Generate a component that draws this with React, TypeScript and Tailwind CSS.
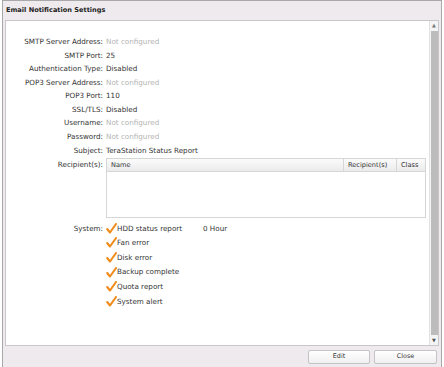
import React from 'react';

const F = { fontFamily: '"DejaVu Sans", sans-serif' };

function Row({ label, value, muted }: { label: string; value: string; muted?: boolean }) {
  return (
    <div className="flex h-[13.55px] items-center">
      <div className="w-[97px] text-right text-[#333]">{label}</div>
      <div className={'pl-[3px] ' + (muted ? 'text-[#b4b4b4]' : 'text-[#333]')}>{value}</div>
    </div>
  );
}

function Check() {
  return (
    <svg width="11" height="11" viewBox="0 0 11 11" className="shrink-0">
      <path d="M1.2 6 L4 9.5 L10 1" fill="none" stroke="#f08c1a" strokeWidth="2.1" strokeLinecap="round" strokeLinejoin="round" />
    </svg>
  );
}

const alerts = ['HDD status report', 'Fan error', 'Disk error', 'Backup complete', 'Quota report', 'System alert'];

export default function App() {
  return (
    <div className="w-[444px] h-[367px] bg-white pl-[2px] overflow-hidden text-[7.2px] leading-none" style={F}>
      <div className="w-[440px] h-[367px] flex flex-col bg-[#efeaee] border-l border-t border-r border-[#a8a8a8]">
        {/* title */}
        <div className="h-[19px] flex items-center px-[3px] font-bold text-[#222] text-[6.6px]">
          Email Notification Settings
        </div>
        {/* panel */}
        <div className="mx-[2px] h-[326px] flex bg-white border border-[#c9c6c9]">
          <div className="flex-1 pt-[14px]">
            <Row label="SMTP Server Address:" value="Not configured" muted />
            <Row label="SMTP Port:" value="25" />
            <Row label="Authentication Type:" value="Disabled" />
            <Row label="POP3 Server Address:" value="Not configured" muted />
            <Row label="POP3 Port:" value="110" />
            <Row label="SSL/TLS:" value="Disabled" />
            <Row label="Username:" value="Not configured" muted />
            <Row label="Password:" value="Not configured" muted />
            <Row label="Subject:" value="TeraStation Status Report" />
            <div className="flex mt-[1px]">
              <div className="w-[97px] text-right text-[#333] pt-[3px]">Recipient(s):</div>
              <div className="ml-[3px] w-[320px] h-[60px] border border-[#d6d6d6] flex flex-col">
                <div className="h-[13px] flex bg-gradient-to-b from-[#fbfbfb] to-[#ebebeb] border-b border-[#d6d6d6] text-[#333] text-[6.6px]">
                  <div className="flex-1 flex items-center pl-[4px]">Name</div>
                  <div className="w-[53px] flex items-center pl-[4px] border-l border-[#d6d6d6]">Recipient(s)</div>
                  <div className="w-[29px] flex items-center pl-[4px] border-l border-[#d6d6d6]">Class</div>
                </div>
              </div>
            </div>
            <div className="flex mt-[3px]">
              <div className="w-[97px] text-right text-[#333] h-[14.6px] flex items-center justify-end">System:</div>
              <div className="ml-[3px] flex flex-col">
                {alerts.map((a, i) => (
                  <div key={a} className="h-[14.6px] flex items-center text-[#333]">
                    <Check />
                    <span className="w-[86px]">{a}</span>
                    {i === 0 && <span>0 Hour</span>}
                  </div>
                ))}
              </div>
            </div>
          </div>
          {/* scrollbar */}
          <div className="w-[9px] flex flex-col items-center bg-[#f4f4f4] border-l border-[#e2e2e2]">
            <div className="h-[9px] flex items-center justify-center text-[#777] text-[5px]">▲</div>
            <div className="flex-1 w-[7px] bg-[#bcbcbc] my-[1px]" />
            <div className="h-[9px] flex items-center justify-center text-[#555] text-[5px]">▼</div>
          </div>
        </div>
        {/* buttons */}
        <div className="flex-1 flex items-center justify-end gap-[4px] pr-[4px]">
          <button className="w-[62px] h-[14px] bg-gradient-to-b from-white to-[#f0f0f0] border border-[#c4c4c4] rounded-[2px] text-[#333] text-[6.4px]">Edit</button>
          <button className="w-[63px] h-[14px] bg-gradient-to-b from-white to-[#f0f0f0] border border-[#c4c4c4] rounded-[2px] text-[#333] text-[6.4px]">Close</button>
        </div>
      </div>
    </div>
  );
}
